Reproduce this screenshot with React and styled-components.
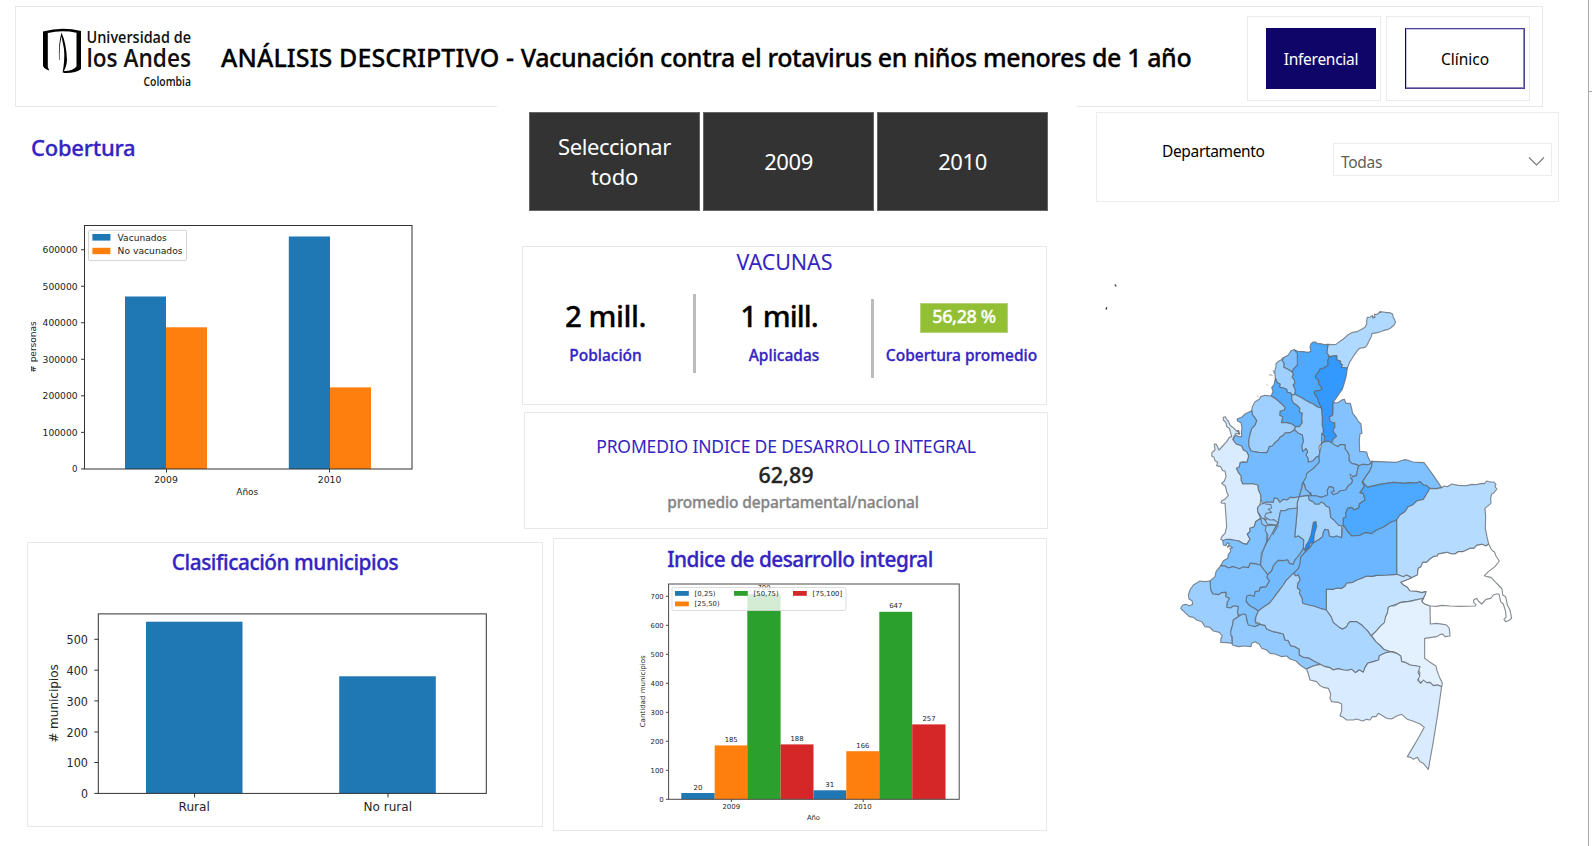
import React from "react";
import styled, { createGlobalStyle } from "styled-components";

const INDIGO = "#3424c2";
const NAVY = "#0f0569";
const LINE = "#e8e8e8";

const GlobalStyle = createGlobalStyle`
  *, *::before, *::after { box-sizing: border-box; }
  body {
    margin: 0;
    background: #fff;
    font-family: "Noto Sans", "Open Sans", sans-serif;
    overflow: hidden;
  }
`;

/* ---------- page frame ---------- */

const Page = styled.div`
  display: flex;
  width: 1592px;
  height: 846px;
  background: #fff;
`;

const Canvas = styled.main`
  width: 1588px;
  padding-top: 6px;
`;

const Gutter = styled.aside`
  width: 4px;
  border-left: 1px solid #a8a8a8;
  &::before {
    content: "";
    display: block;
    height: 92px;
    border-bottom: 1px solid #a8a8a8;
  }
`;

const Text = styled.span`
  display: block;
  white-space: pre;
  font-size: ${(p) => p.$size}px;
  line-height: ${(p) => p.$line || 30}px;
  font-weight: ${(p) => p.$weight || 400};
  letter-spacing: ${(p) => p.$track || 0}px;
  color: ${(p) => p.$color || "#000"};
  -webkit-text-stroke: ${(p) => (p.$weight ? 0.3 : 0)}px currentColor;
`;

/* ---------- header ---------- */

const Header = styled.header`
  display: flex;
  width: 1528px;
  height: 101px;
  margin-left: 15px;
  border: 1px solid ${LINE};
`;

const LogoArea = styled.div`
  width: 205px;
  padding: 11px 0 0 26px;
`;

const TitleArea = styled.h1`
  display: flex;
  flex: 1;
  margin: 0;
  padding-top: 35px;
`;

const NavTile = styled.div`
  width: ${(p) => p.$width}px;
  height: 85px;
  margin: 9px ${(p) => p.$after}px 0 0;
  padding: 11px 0 0 18px;
  border: 1px solid #ebebeb;
`;

const NavButton = styled.button`
  display: flex;
  justify-content: center;
  width: ${(p) => p.$width}px;
  height: 61px;
  padding: 15px 0 0;
  font-family: inherit;
  background: ${(p) => (p.$filled ? NAVY : "#fff")};
  border: 1px solid ${(p) => (p.$filled ? NAVY : "#4b4398")};
  border-left-color: ${NAVY};
  box-shadow: ${(p) => (p.$filled ? "none" : "inset -1px -1px 0 #8d88c0, inset 1px 1px 0 #c9c6e2")};
`;

/* ---------- body ---------- */

const Body = styled.div`
  display: flex;
`;

const Reports = styled.div`
  width: 1077px;
`;

const Row = styled.div`
  display: flex;
`;

const CoveragePanel = styled.section`
  width: 497px;
  height: 431px;
  padding: 25px 0 0 31px;
`;

const CenterColumn = styled.section`
  width: 580px;
  margin-top: -1px;
  padding: 6px 0 0 26px;
  background: #fff;
`;

const Slicer = styled.div`
  display: flex;
  gap: 3px;
  width: 519px;
  height: 99px;
  margin-left: 6px;
`;

const SlicerTile = styled.button`
  flex: 1;
  display: flex;
  flex-direction: column;
  align-items: center;
  justify-content: center;
  padding: 0 0 1px;
  font-family: inherit;
  background: #333;
  border: 1px solid #666;
`;

const Card = styled.section`
  width: ${(p) => p.$width}px;
  height: ${(p) => p.$height}px;
  margin: ${(p) => p.$margin};
  padding-top: ${(p) => p.$pad || 0}px;
  border: 1px solid ${LINE};
  display: flex;
  flex-direction: column;
  align-items: center;
`;

const KpiRow = styled.div`
  display: flex;
  align-self: stretch;
  height: 100px;
  margin-top: 18px;
`;

const Kpi = styled.div`
  flex: none;
  width: ${(p) => p.$width}px;
  display: flex;
  flex-direction: column;
  align-items: center;
`;

const KpiValue = styled.div`
  height: 46px;
  padding: 2px ${(p) => p.$shift || 0}px 0 0;
`;

const Divider = styled.div`
  flex: none;
  width: 3px;
  height: 79px;
  margin: ${(p) => p.$top}px 0 0 ${(p) => p.$left}px;
  background: #bcbcbc;
`;

const Badge = styled.div`
  display: flex;
  justify-content: center;
  width: 88px;
  height: 30px;
  margin: 7px 0 0 5px;
  background: #93bf35;
  border: 1px solid #b5d27a;
`;

const Caption = styled.div`
  padding-left: 14px;
`;

/* ---------- right side ---------- */

const RegionPanel = styled.section`
  flex: 1;
`;

const FilterCard = styled.div`
  display: flex;
  width: 463px;
  height: 90px;
  margin: 5px 0 0 19px;
  border: 1px solid #ececec;
`;

const FilterLabel = styled.div`
  width: 236px;
  padding: 23px 0 0 65px;
`;

const Select = styled.div`
  display: flex;
  justify-content: space-between;
  width: 219px;
  height: 33px;
  margin-top: 30px;
  padding: 3px 6px 0 7px;
  border: 1px solid #ececec;
`;

const MapArea = styled.div`
  margin-top: 68px;
  padding-left: 23px;
`;

const Graphic = styled.svg`
  display: block;
  margin: ${(p) => p.$margin || 0};
`;

/* ---------- logo ---------- */

function Logo() {
  return (
    <Graphic width="160" height="78" viewBox="42 18 160 78">
      <path d="M43 31.5 Q62 26.5 81 31 V69 Q76 73.5 63.5 73 L63 71 Q72 71.5 76.5 66.5 V32.8 Q62 29.8 47.8 33 V67 L49.3 70.5 Q44.5 69 43 66 Z" />
      <path d="M59 60 Q58.3 44 61.5 32.5 Q66.5 44 67 60 Q66.5 68 62.5 73 Q65 60 64 49 L61.6 36.5 Q59.2 46 59.5 60 Z" />
      <g fontFamily="'Open Sans', sans-serif" fontWeight="600" fill="#111">
        <text x="86.5" y="43.3" fontSize="15.5" textLength="104.5" lengthAdjust="spacingAndGlyphs">Universidad de</text>
        <text x="86.5" y="66.8" fontSize="24.5" textLength="104.5" lengthAdjust="spacingAndGlyphs">los Andes</text>
        <text x="143.5" y="85.6" fontSize="12.3" textLength="47.5" lengthAdjust="spacingAndGlyphs">Colombia</text>
      </g>
    </Graphic>
  );
}

/* ---------- charts ---------- */

const BLUE = "#1f77b4";
const ORANGE = "#ff7f0e";
const GREEN = "#2ca02c";
const RED = "#d62728";

function ChartText({ x, y, width, size, anchor = "middle", children, ...rest }) {
  return (
    <text x={x} y={y} fontSize={size} textAnchor={anchor} textLength={width} lengthAdjust="spacingAndGlyphs" {...rest}>
      {children}
    </text>
  );
}

function Axes({ left, right, top, bottom, ticksY, ticksX, tick = 3.5, stroke = "#333" }) {
  return (
    <g stroke={stroke} strokeWidth="1" fill="none">
      <rect x={left} y={top} width={right - left} height={bottom - top} />
      {ticksY.map((y) => (
        <line key={y} x1={left - tick} x2={left} y1={y} y2={y} />
      ))}
      {ticksX.map((x) => (
        <line key={x} x1={x} x2={x} y1={bottom} y2={bottom + tick} />
      ))}
    </g>
  );
}

function Bars({ data, base }) {
  return data.map(([x1, x2, top, color]) => (
    <rect key={x1} x={x1} y={top} width={x2 - x1} height={base - top} fill={color} />
  ));
}

function CoverageChart() {
  const ticks = [0, 1, 2, 3, 4, 5, 6].map((n) => 468.9 - n * 36.53);
  return (
    <Graphic width="400" height="290" viewBox="31 215 400 290" $margin="53px 0 0 0">
      <g fontFamily="'DejaVu Sans', sans-serif" fill="#1a1a1a">
        <Bars
          base={469}
          data={[
            [125, 166, 296.5, BLUE],
            [166, 207, 327.3, ORANGE],
            [288.8, 330, 236.5, BLUE],
            [330, 371, 387.4, ORANGE],
          ]}
        />
        <Axes left={84.5} right={412} top={225.5} bottom={469} ticksY={ticks} ticksX={[166.5, 329.5]} />
        {ticks.map((y, n) => (
          <ChartText key={n} x={77.6} y={y + 3.5} size={9} anchor="end" width={n ? 35 : 5.5}>
            {n * 100000}
          </ChartText>
        ))}
        <rect x="88.5" y="230.3" width="98" height="30.3" rx="1.5" fill="#fff" stroke="#d4d4d4" />
        <rect x="92.4" y="234" width="18" height="6.6" fill={BLUE} />
        <rect x="92.4" y="247.8" width="18" height="6.4" fill={ORANGE} />
        <ChartText x={117.6} y={240.6} size={9} anchor="start" width={49.2}>Vacunados</ChartText>
        <ChartText x={117.6} y={254.4} size={9} anchor="start" width={65}>No vacunados</ChartText>
        <ChartText x={166} y={482.8} size={9} width={23.6}>2009</ChartText>
        <ChartText x={329.6} y={482.8} size={9} width={23.6}>2010</ChartText>
        <ChartText x={247.3} y={495} size={9} width={22}>Años</ChartText>
        <ChartText x={0} y={0} size={9} width={51.5} transform="translate(36 347) rotate(-90)"># personas</ChartText>
      </g>
    </Graphic>
  );
}

function RuralChart() {
  const ticks = [793.4, 762.5, 732, 700.9, 670.2, 639.3];
  return (
    <Graphic width="460" height="220" viewBox="40 600 460 220" $margin="18px 0 0 -31px">
      <g fontFamily="'DejaVu Sans', sans-serif" fill="#262626">
        <Bars base={793.4} data={[[146, 242.5, 621.7, BLUE], [339.2, 435.8, 676.3, BLUE]]} />
        <Axes left={98.3} right={486.3} top={613.9} bottom={793.4} ticksY={ticks} ticksX={[194.6, 388]} tick={4} />
        {ticks.map((y, n) => (
          <ChartText key={n} x={88} y={y + 4.7} size={12.6} anchor="end" width={n ? 21.4 : 7}>
            {n * 100}
          </ChartText>
        ))}
        <ChartText x={194.2} y={811} size={12.6} width={31.4}>Rural</ChartText>
        <ChartText x={387.8} y={811} size={12.6} width={48.5}>No rural</ChartText>
        <ChartText x={0} y={0} size={11.6} width={78.5} transform="translate(57.6 703.5) rotate(-90)"># municipios</ChartText>
      </g>
    </Graphic>
  );
}

function DevelopmentChart() {
  const ticks = [0, 1, 2, 3, 4, 5, 6, 7].map((n) => 799.3 - n * 29);
  const bars = [
    [681.3, 714.7, 793, BLUE],
    [714.7, 747.3, 745.4, ORANGE],
    [747.3, 780.6, 594.3, GREEN],
    [780.6, 813.5, 744.4, RED],
    [813.5, 846.3, 790.3, BLUE],
    [846.3, 879.3, 751.2, ORANGE],
    [879.3, 912.2, 611.8, GREEN],
    [912.2, 945.5, 724.4, RED],
  ];
  const labels = [
    [698, 789.8, 9, "20"],
    [731.2, 742.2, 13, "185"],
    [764, 590.4, 13, "709"],
    [797, 741.2, 13, "188"],
    [829.8, 787, 9, "31"],
    [862.8, 747.8, 13, "166"],
    [895.8, 608.4, 13.2, "647"],
    [929, 721, 13.2, "257"],
  ];
  const legend = [
    [675, 591, BLUE, "[0,25)", 21],
    [675, 601.5, ORANGE, "[25,50)", 25],
    [734, 591, GREEN, "[50,75)", 25],
    [793, 591, RED, "[75,100]", 29.6],
  ];
  return (
    <Graphic width="340" height="248" viewBox="630 578 340 248" $margin="-2px 0 0 0">
      <g fontFamily="'DejaVu Sans', sans-serif" fill="#262626">
        <Bars base={799.3} data={bars} />
        <Axes left={668.6} right={959.2} top={584} bottom={799.3} ticksY={ticks} ticksX={[731.4, 863.2]} tick={2.7} stroke="#4a4a4a" />
        {ticks.map((y, n) => (
          <ChartText key={n} x={663.6} y={y + 2.6} size={6.8} anchor="end" width={n ? 13 : 4.4}>
            {n * 100}
          </ChartText>
        ))}
        {labels.map(([x, y, width, value]) => (
          <ChartText key={x} x={x} y={y} size={6.8} width={width}>{value}</ChartText>
        ))}
        <rect x="672" y="587.5" width="174" height="23" rx="1.2" fill="#fff" fillOpacity="0.8" stroke="#d6d6d6" strokeOpacity="0.8" />
        {legend.map(([x, y, color, text, width]) => (
          <g key={text}>
            <rect x={x} y={y} width="13.8" height="4.8" fill={color} />
            <ChartText x={x + 19.6} y={y + 4.7} size={6.8} anchor="start" width={width}>{text}</ChartText>
          </g>
        ))}
        <ChartText x={731.3} y={809.3} size={6.8} width={17.8}>2009</ChartText>
        <ChartText x={862.8} y={809.3} size={6.8} width={17.8}>2010</ChartText>
        <ChartText x={813.5} y={819.6} size={6.8} width={13}>Año</ChartText>
        <ChartText x={0} y={0} size={6.8} width={72} transform="translate(644.8 691.3) rotate(-90)">Cantidad municipios</ChartText>
      </g>
    </Graphic>
  );
}

/* ---------- map of the departments (three units to a pixel) ---------- */

const departments = [
  ["Risaralda", "#92cbff", "263,635 292,668 325,668 308,712 292,740 268,720 260,670"],
  ["La Guajira", "#b0d9ff", "474,133 485,134 498,133 508,125 520,117 532,106 545,98 560,95 575,88 585,82 590,73 590,62 592,52 601,51 607,46 609,54 615,52 613,43 622,43 630,35 640,36 650,38 660,38 668,42 670,52 677,66 672,75 662,84 652,89 640,92 622,98 606,101 603,112 597,124 590,137 585,142 568,145 560,155 552,166 545,178 540,184 532,204 514,202 517,194 510,190 512,184 501,180 500,167 478,170 470,158 472,148"],
  ["Magdalena", "#4da9ff", "372,149 384,154 400,155 416,157 423,153 420,142 423,131 430,126 437,126 442,131 452,131 462,134 474,133 472,148 470,158 478,170 473,182 475,195 462,204 450,207 444,218 438,225 436,232 445,240 447,252 453,260 457,268 447,272 434,273 433,280 442,292 446,305 455,325 440,320 430,312 420,308 404,299 395,293 374,283 376,270 372,262 369,255 374,250 373,240 366,232 370,222 365,215 372,205 382,195 380,180 382,165"],
  ["Atlántico", "#7fbfff", "340,173 355,165 363,152 372,149 382,160 382,195 372,205 365,215 352,207 341,202 342,190 337,182"],
  ["Bolívar", "#9fd0ff", "318,200 318,190 327,183 333,180 340,173 337,182 342,190 341,202 352,207 365,215 370,222 366,232 373,240 374,250 369,255 376,270 374,283 366,285 360,278 352,277 350,268 340,264 329,262 330,252 322,248 316,235 314,215"],
  ["Sucre", "#52aaff", "316,235 322,248 330,252 329,262 340,264 350,268 352,277 360,278 366,285 365,298 370,308 380,315 390,325 388,335 397,340 395,355 397,368 388,380 376,380 365,372 350,368 342,370 334,368 338,350 329,346 330,333 343,330 345,322 335,312 328,306 318,297 303,288 309,275 305,262 312,255"],
  ["Bolívar sur", "#9fd0ff", "366,285 374,283 395,293 404,299 420,308 430,312 440,320 455,325 456,345 458,370 461,400 455,415 455,430 447,440 449,458 447,468 438,472 430,482 415,487 414,475 408,465 413,455 408,446 398,455 395,438 400,425 397,405 385,400 374,390 376,380 388,380 397,368 395,355 397,340 388,335 390,325 380,315 370,308 365,298"],
  ["Cesar", "#3399ff", "478,170 500,167 501,180 512,184 510,190 517,194 514,202 532,204 530,220 527,235 522,252 517,268 508,280 498,295 489,307 489,325 489,340 487,347 478,350 480,362 488,368 494,368 495,382 490,388 490,395 496,402 500,408 490,417 485,428 475,424 462,425 464,410 458,402 461,390 456,372 458,352 455,325 446,305 442,292 433,280 434,273 447,272 457,268 453,260 447,252 445,240 436,232 438,225 444,218 450,207 462,204 475,195 473,182"],
  ["Norte de Santander", "#83c2ff", "489,307 500,309 508,305 515,300 523,298 528,310 541,310 545,325 548,340 558,352 565,364 573,372 574,385 576,400 570,402 568,420 569,454 580,455 590,456 593,468 600,483 607,484 598,493 590,494 578,493 570,497 560,494 545,490 537,482 537,465 532,455 525,447 525,434 510,434 505,440 495,436 485,428 490,417 500,408 496,402 490,395 490,388 495,382 494,368 488,368 480,362 478,350 487,347 489,340"],
  ["Santander", "#7ebfff", "455,430 462,425 475,424 485,428 495,436 505,440 510,434 525,434 525,447 532,455 537,465 537,482 545,490 560,494 566,500 562,512 560,527 548,530 540,522 543,535 548,540 545,550 535,557 527,570 510,573 502,580 490,584 483,577 492,573 490,563 478,560 472,570 473,585 455,592 440,588 425,587 415,575 407,568 403,552 397,545 405,530 410,520 420,512 430,505 447,487 447,468 450,455"],
  ["Franja de Santander", "#73baff", "455,400 464,410 462,425 455,430"],
  ["Córdoba", "#9fd0ff", "245,332 247,320 255,305 268,298 272,290 285,286 303,288 318,297 328,306 335,312 345,322 343,330 330,333 329,346 338,350 334,368 350,368 365,372 376,380 370,392 360,398 345,399 340,406 330,412 325,420 315,428 307,438 298,440 294,452 290,458 265,457 243,453 236,438 236,420 240,402 245,385 255,375 260,362 252,350 248,345"],
  ["Antioquia", "#73baff", "201,357 215,352 225,342 245,332 248,345 252,350 260,362 255,375 245,385 240,402 236,420 236,438 243,453 265,457 290,458 294,452 298,440 307,438 315,428 325,420 330,412 340,406 345,399 360,398 374,390 385,400 397,405 400,425 395,438 398,455 408,446 413,455 408,465 414,475 415,487 430,482 438,472 447,468 447,487 430,505 410,520 408,532 397,550 393,570 388,592 372,593 360,592 352,600 340,598 330,607 322,596 313,594 310,607 290,606 278,611 272,598 272,585 265,570 263,555 250,552 218,552 213,540 213,528 205,518 199,505 208,500 210,488 220,485 230,487 236,468 230,455 220,450 215,438 198,432 188,418 198,405 206,410 215,410 214,395 216,385 213,368 203,363"],
  ["Chocó", "#d8ebff", "160,352 166,350 170,358 175,363 180,375 192,385 198,392 205,392 207,403 198,400 192,410 188,418 198,432 215,438 220,450 230,455 236,468 230,487 220,485 210,488 208,500 199,505 205,518 213,528 213,540 218,552 250,552 263,555 265,570 272,585 272,598 270,615 262,625 265,640 272,655 257,665 253,680 240,685 240,695 232,702 240,718 230,733 218,730 207,723 190,720 180,718 168,722 160,722 152,718 157,708 165,700 170,680 168,650 165,610 153,609 155,603 164,598 175,587 170,575 166,558 155,550 163,543 168,530 165,513 158,512 152,500 140,497 143,487 135,482 132,472 125,468 126,458 135,450 133,432 139,433 147,450 158,438 170,425 178,412 185,410 182,398 178,385 170,380 168,368 160,360"],
  ["Valle del Cauca", "#80c1ff", "272,655 276,672 290,680 291,700 290,725 282,745 274,760 273,780 270,795 255,791 240,790 236,803 220,801 208,806 190,800 175,804 165,798 152,797 160,782 173,775 175,763 182,755 180,745 188,743 180,738 172,742 178,732 172,728 168,737 160,735 158,722 168,718 180,718 190,720 207,723 218,730 230,733 240,718 232,702 240,695 240,685 253,680 257,665"],
  ["Caldas", "#a0d1ff", "272,612 282,610 290,606 310,607 313,594 322,596 330,607 340,598 352,600 360,592 372,593 388,590 382,608 382,624 368,627 355,627 345,632 332,632 328,650 325,668 318,676 305,673 292,673 285,658 276,655 263,635 263,622"],
  ["Quindío", "#92cbff", "288,677 305,676 320,676 312,690 308,705 295,720 290,728 294,705 286,692"],
  ["Cundinamarca", "#a6d4ff", "388,590 400,588 415,586 418,600 430,606 435,612 448,612 453,606 462,610 468,618 478,622 480,632 482,652 492,660 505,675 515,678 515,713 500,708 488,712 478,708 475,690 465,688 460,697 458,710 445,720 430,728 420,742 411,750 400,748 401,720 393,714 385,708 374,712 378,670 382,624 382,608"],
  ["Tolima", "#7fc1ff", "325,668 328,650 332,632 345,632 355,627 382,624 378,670 374,712 385,708 393,714 401,720 400,745 392,760 385,768 375,780 370,793 358,790 353,780 340,782 325,781 316,790 310,798 305,813 293,824 282,810 272,795 274,775 278,755 290,728 300,712 312,690"],
  ["Boyacá", "#73baff", "415,586 422,578 425,587 440,588 455,592 473,585 472,570 478,560 490,563 492,573 483,577 490,584 502,580 510,573 527,570 535,557 545,550 548,540 543,535 548,530 560,527 562,512 566,498 578,493 590,494 598,493 607,484 605,500 598,515 587,530 577,545 583,560 570,578 580,580 585,600 575,607 568,612 567,623 553,630 545,622 533,625 527,640 528,652 520,655 520,675 515,678 505,675 492,660 482,652 480,632 478,622 468,618 462,610 453,606 448,612 435,612 430,606 418,600"],
  ["Boyacá occidental", "#7ebfff", "400,548 403,555 407,568 415,575 425,587 410,586 388,590 393,572"],
  ["Arauca", "#7fc1ff", "607,484 630,485 680,487 690,483 705,479 718,482 730,486 745,487 762,488 788,523 815,563 800,566 780,565 770,557 760,555 750,545 738,549 715,548 705,550 670,547 630,553 600,560 593,562 577,548 587,530 598,515 605,500"],
  ["Casanare", "#4da8ff", "577,545 593,562 600,560 630,553 670,547 705,550 715,548 738,549 750,545 760,555 770,557 780,567 770,582 760,598 740,603 728,615 715,620 705,635 690,645 680,660 660,668 640,682 620,690 605,701 585,698 570,706 545,708 533,695 520,675 520,655 528,652 527,640 533,625 545,622 553,630 567,623 568,612 575,607 585,600 580,580 570,578 583,560"],
  ["Vichada", "#b5dbff", "780,565 800,566 815,563 822,558 832,560 845,552 865,556 890,557 905,553 920,554 935,550 943,551 950,543 960,546 972,546 978,553 975,560 981,567 970,580 965,582 962,595 963,610 945,625 947,650 946,685 951,710 956,732 948,738 935,733 920,736 912,745 900,745 890,750 878,755 865,755 855,762 845,762 830,757 815,760 805,762 802,768 790,770 780,777 770,787 758,787 753,800 745,805 742,825 725,833 710,825 700,830 680,823 680,660 690,645 705,635 715,620 728,615 740,603 760,598 770,582"],
  ["Guainía", "#ffffff", "956,732 962,745 968,753 973,755 978,768 988,783 975,800 955,815 943,827 952,830 963,832 975,845 985,855 996,867 998,885 1007,890 1012,915 1020,930 1025,955 1015,962 1007,965 1002,958 1008,952 1007,935 1000,912 992,905 987,882 980,882 970,885 962,895 948,898 935,912 925,903 920,895 911,900 911,908 918,914 916,918 870,919 840,918 815,916 800,919 780,918 765,913 755,905 760,897 768,875 755,878 740,874 720,873 712,862 700,855 692,847 703,842 725,833 742,825 745,805 753,800 758,787 770,787 780,777 790,770 802,768 805,762 815,760 830,757 845,762 855,762 865,755 878,755 890,750 900,745 912,745 920,736 935,733 948,738"],
  ["Guaviare", "#c2e2ff", "469,868 490,868 500,864 515,865 525,858 530,849 548,847 560,840 575,835 590,828 605,829 620,826 650,825 680,823 700,830 710,825 725,833 703,842 692,847 700,855 712,862 720,873 740,874 755,878 768,875 765,885 758,897 735,900 715,904 695,906 680,912 665,917 655,922 652,940 647,950 645,968 630,980 620,992 603,1007 592,992 582,985 575,975 560,965 550,965 540,965 535,970 530,980 517,988 505,980 490,968 483,950 469,930"],
  ["Meta", "#6bb6ff", "411,750 420,742 430,728 445,720 458,710 460,697 465,688 475,690 478,708 488,712 500,708 515,713 517,690 520,675 533,695 545,708 570,706 585,698 605,701 620,690 640,682 660,668 680,660 680,823 650,825 620,826 605,829 590,828 575,835 560,840 548,847 530,849 525,858 515,865 500,864 490,868 469,868 469,930 450,925 430,918 415,915 398,910 396,895 388,880 390,870 382,865 383,850 390,840 385,825 378,828 370,820 385,805 390,790 392,770"],
  ["Huila", "#73baff", "401,745 411,750 392,770 390,790 385,805 370,820 358,832 348,842 340,855 325,875 310,895 298,910 280,922 265,933 253,925 240,918 228,905 230,888 240,885 252,889 255,875 268,872 270,862 288,860 298,842 290,832 293,824 305,813 310,798 316,790 325,781 340,782 353,780 358,790 370,793 375,780 385,768"],
  ["Cauca", "#80c1ff", "152,797 165,798 175,804 190,800 208,806 220,801 236,803 240,790 255,791 270,795 282,810 293,824 290,832 298,842 288,860 270,862 268,872 255,875 252,889 240,885 230,888 228,905 240,918 253,925 265,933 260,945 255,960 258,970 272,973 255,980 240,980 233,975 230,955 225,942 212,945 205,947 202,935 205,920 190,918 182,924 170,922 171,908 178,895 167,890 168,877 155,878 145,884 128,882 122,870 120,843 135,830 138,815"],
  ["Nariño", "#9ccfff", "120,843 122,870 128,882 145,884 155,878 168,877 167,890 178,895 171,908 170,922 182,924 190,918 205,920 202,935 205,950 190,960 188,975 183,990 187,1030 170,1028 152,1027 153,1015 157,1008 148,997 130,993 120,982 105,980 95,965 80,960 70,952 58,950 45,938 32,925 38,915 48,913 58,917 68,913 66,902 57,897 55,885 60,870 70,855 90,843 105,845"],
  ["Putumayo", "#92c9ff", "205,950 218,942 228,945 230,962 235,975 255,980 272,973 285,976 290,987 310,995 325,998 340,1002 345,1020 355,1022 362,1037 375,1040 388,1048 388,1065 400,1072 415,1073 432,1083 450,1092 430,1098 408,1107 390,1095 378,1083 360,1077 350,1068 335,1070 315,1062 300,1060 290,1050 275,1045 268,1033 255,1025 245,1030 243,1040 225,1038 205,1040 187,1035 187,1010 182,1005 183,990 188,975 190,960"],
  ["Caquetá", "#abd6ff", "370,820 378,828 385,825 390,840 383,850 382,865 390,870 388,880 396,895 398,910 415,915 430,918 450,925 469,930 483,950 490,968 505,980 517,988 530,980 535,970 540,965 560,965 575,975 592,992 603,1007 618,1025 633,1038 642,1048 662,1055 645,1059 628,1067 626,1080 610,1085 593,1090 585,1103 580,1117 568,1110 556,1118 545,1108 535,1111 520,1110 505,1106 490,1110 480,1103 465,1100 450,1092 432,1083 415,1073 400,1072 388,1065 388,1048 375,1040 362,1037 355,1022 345,1020 340,1002 325,998 310,995 290,987 285,976 272,973 265,968 256,965 258,950 265,933 280,922 298,910 310,895 325,875 340,855 348,842 358,832"],
  ["Vaupés", "#e3f1ff", "655,922 665,917 672,918 690,908 720,904 758,895 755,905 765,913 780,918 781,972 800,970 820,973 830,975 838,985 840,1008 825,1010 818,1002 812,1003 800,1010 785,1012 764,1015 764,1075 778,1085 798,1098 801,1112 808,1130 817,1150 815,1160 803,1155 790,1157 780,1147 770,1150 755,1145 748,1150 744,1130 750,1120 740,1098 720,1095 705,1087 695,1085 692,1068 680,1060 670,1055 662,1055 642,1048 633,1038 618,1025 605,1007 620,992 630,980 643,968 647,950 652,940"],
  ["Amazonas", "#d9ecff", "410,1107 430,1098 450,1093 465,1100 480,1103 490,1110 505,1106 520,1110 535,1111 545,1108 556,1118 568,1110 580,1117 585,1103 593,1090 610,1085 626,1080 628,1067 645,1059 662,1055 680,1060 692,1068 695,1085 705,1087 720,1095 740,1098 750,1100 744,1118 750,1128 743,1140 752,1150 760,1140 770,1148 780,1147 790,1157 803,1155 815,1160 802,1250 790,1325 775,1408 768,1400 760,1390 750,1385 742,1372 730,1378 722,1372 712,1370 737,1328 763,1282 750,1272 730,1264 712,1258 695,1243 680,1248 665,1257 650,1255 640,1249 625,1240 618,1250 607,1250 600,1260 590,1258 578,1263 560,1257 550,1260 530,1260 520,1252 510,1248 515,1232 515,1212 505,1207 485,1205 480,1195 482,1182 475,1165 460,1162 450,1157 440,1145 420,1140 415,1122"],
  ["Bogotá", "#1a8cff", "430,667 438,665 440,680 436,692 433,703 431,728 420,730 418,743 404,752 408,735 416,723 423,705"],
];

function ColombiaMap() {
  return (
    <Graphic width="430" height="500" viewBox="1100 270 430 500">
      <g transform="translate(1170 300) scale(0.33333)" stroke="#5f666c" strokeOpacity="0.75" strokeWidth="3.4" strokeLinejoin="round">
        {departments.map(([name, fill, points]) => (
          <polygon key={name} points={points} fill={fill} />
        ))}
        <path fill="none" d="M285 612 L303 614 L305 624 L295 628 L305 637 L288 640 L284 650 L300 660 L312 659 L325 668 M280 655 L292 659 M325 676 L308 705" />
        <path fill="none" d="M297 224 L308 226 M290 254 L293 256 M262 289 L265 290 M309 210 L313 222" strokeWidth="2.5" />
        <path fill="none" d="M200 395 L206 392 L209 402 L203 400 M608 52 L614 50 M627 38 L634 36" />
      </g>
      <path d="M1115 284.5 L1116 286.5 M1106 309.5 L1106.8 307.3" stroke="#444" strokeWidth="1.5" />
    </Graphic>
  );
}

/* ---------- dashboard ---------- */

export default function App() {
  return (
    <Page>
      <GlobalStyle />
      <Canvas>
        <Header>
          <LogoArea>
            <Logo />
          </LogoArea>
          <TitleArea>
            <Text $size={25} $weight={500} $track={0.09}>{"ANÁLISIS DESCRIPTIVO - "}</Text>
            <Text $size={25} $weight={500} $track={-0.38}>Vacunación contra el rotavirus en niños menores de 1 año</Text>
          </TitleArea>
          <NavTile $width={134} $after={5}>
            <NavButton $width={110} $filled>
              <Text $size={15.5} $track={-0.26} $color="#fff">Inferencial</Text>
            </NavButton>
          </NavTile>
          <NavTile $width={144} $after={12}>
            <NavButton $width={120}>
              <Text $size={15.5}>Clínico</Text>
            </NavButton>
          </NavTile>
        </Header>

        <Body>
          <Reports>
            <Row>
              <CoveragePanel>
                <Text $size={22} $weight={500} $track={-0.25} $color={INDIGO}>Cobertura</Text>
                <CoverageChart />
              </CoveragePanel>

              <CenterColumn>
                <Slicer>
                  <SlicerTile>
                    <Text $size={22} $track={-0.45} $color="#fff">Seleccionar</Text>
                    <Text $size={22} $track={-0.2} $color="#fff">todo</Text>
                  </SlicerTile>
                  <SlicerTile>
                    <Text $size={22} $track={-0.4} $color="#fff">2009</Text>
                  </SlicerTile>
                  <SlicerTile>
                    <Text $size={22} $track={-0.4} $color="#fff">2010</Text>
                  </SlicerTile>
                </Slicer>

                <Card $width={525} $height={159} $margin="35px 0 0 -1px">
                  <Text $size={21.5} $track={-0.1} $line={29} $color={INDIGO}>VACUNAS</Text>
                  <KpiRow>
                    <Kpi $width={165}>
                      <KpiValue>
                        <Text $size={29.5} $weight={500} $track={-0.5} $line={40}>2 mill.</Text>
                      </KpiValue>
                      <Text $size={15.5} $weight={500} $color={INDIGO}>Población</Text>
                    </Kpi>
                    <Divider $left={5} $top={0} />
                    <Kpi $width={176}>
                      <KpiValue $shift={10}>
                        <Text $size={29.5} $weight={500} $track={-1} $line={40}>1 mill.</Text>
                      </KpiValue>
                      <Text $size={15.5} $weight={500} $color={INDIGO}>Aplicadas</Text>
                    </Kpi>
                    <Divider $left={-1} $top={5} />
                    <Kpi $width={175}>
                      <KpiValue>
                        <Badge>
                          <Text $size={18} $weight={500} $track={-0.4} $line={24} $color="#fff">56,28 %</Text>
                        </Badge>
                      </KpiValue>
                      <Text $size={15.5} $weight={500} $color={INDIGO}>Cobertura promedio</Text>
                    </Kpi>
                  </KpiRow>
                </Card>

                <Card $width={524} $height={117} $margin="7px 0 0 1px" $pad={18}>
                  <Text $size={17.5} $track={-0.16} $color={INDIGO}>PROMEDIO INDICE DE DESARROLLO INTEGRAL</Text>
                  <Text $size={21.5} $weight={500} $line={27} $color="#252423">62,89</Text>
                  <Caption>
                    <Text $size={15.5} $weight={500} $track={-0.12} $line={28} $color="#858585">promedio departamental/nacional</Text>
                  </Caption>
                </Card>
              </CenterColumn>
            </Row>

            <Row>
              <Card $width={516} $height={285} $margin="4px 10px 0 27px">
                <Text $size={20.8} $weight={500} $track={-0.45} $line={39} $color={INDIGO}>Clasificación municipios</Text>
                <RuralChart />
              </Card>
              <Card $width={494} $height={293} $margin="0">
                <Text $size={20.8} $weight={500} $track={-0.5} $line={41} $color={INDIGO}>Indice de desarrollo integral</Text>
                <DevelopmentChart />
              </Card>
            </Row>
          </Reports>

          <RegionPanel>
            <FilterCard>
              <FilterLabel>
                <Text $size={15.5} $track={-0.35}>Departamento</Text>
              </FilterLabel>
              <Select>
                <Text $size={15.5} $track={-0.3} $color="#605e5c">Todas</Text>
                <Graphic width="17" height="11" viewBox="0 0 17 11" $margin="9px 0 0 0">
                  <path d="M1 1.5 L8.5 9 L16 1.5" fill="none" stroke="#777" strokeWidth="1.1" />
                </Graphic>
              </Select>
            </FilterCard>
            <MapArea>
              <ColombiaMap />
            </MapArea>
          </RegionPanel>
        </Body>
      </Canvas>
      <Gutter />
    </Page>
  );
}
